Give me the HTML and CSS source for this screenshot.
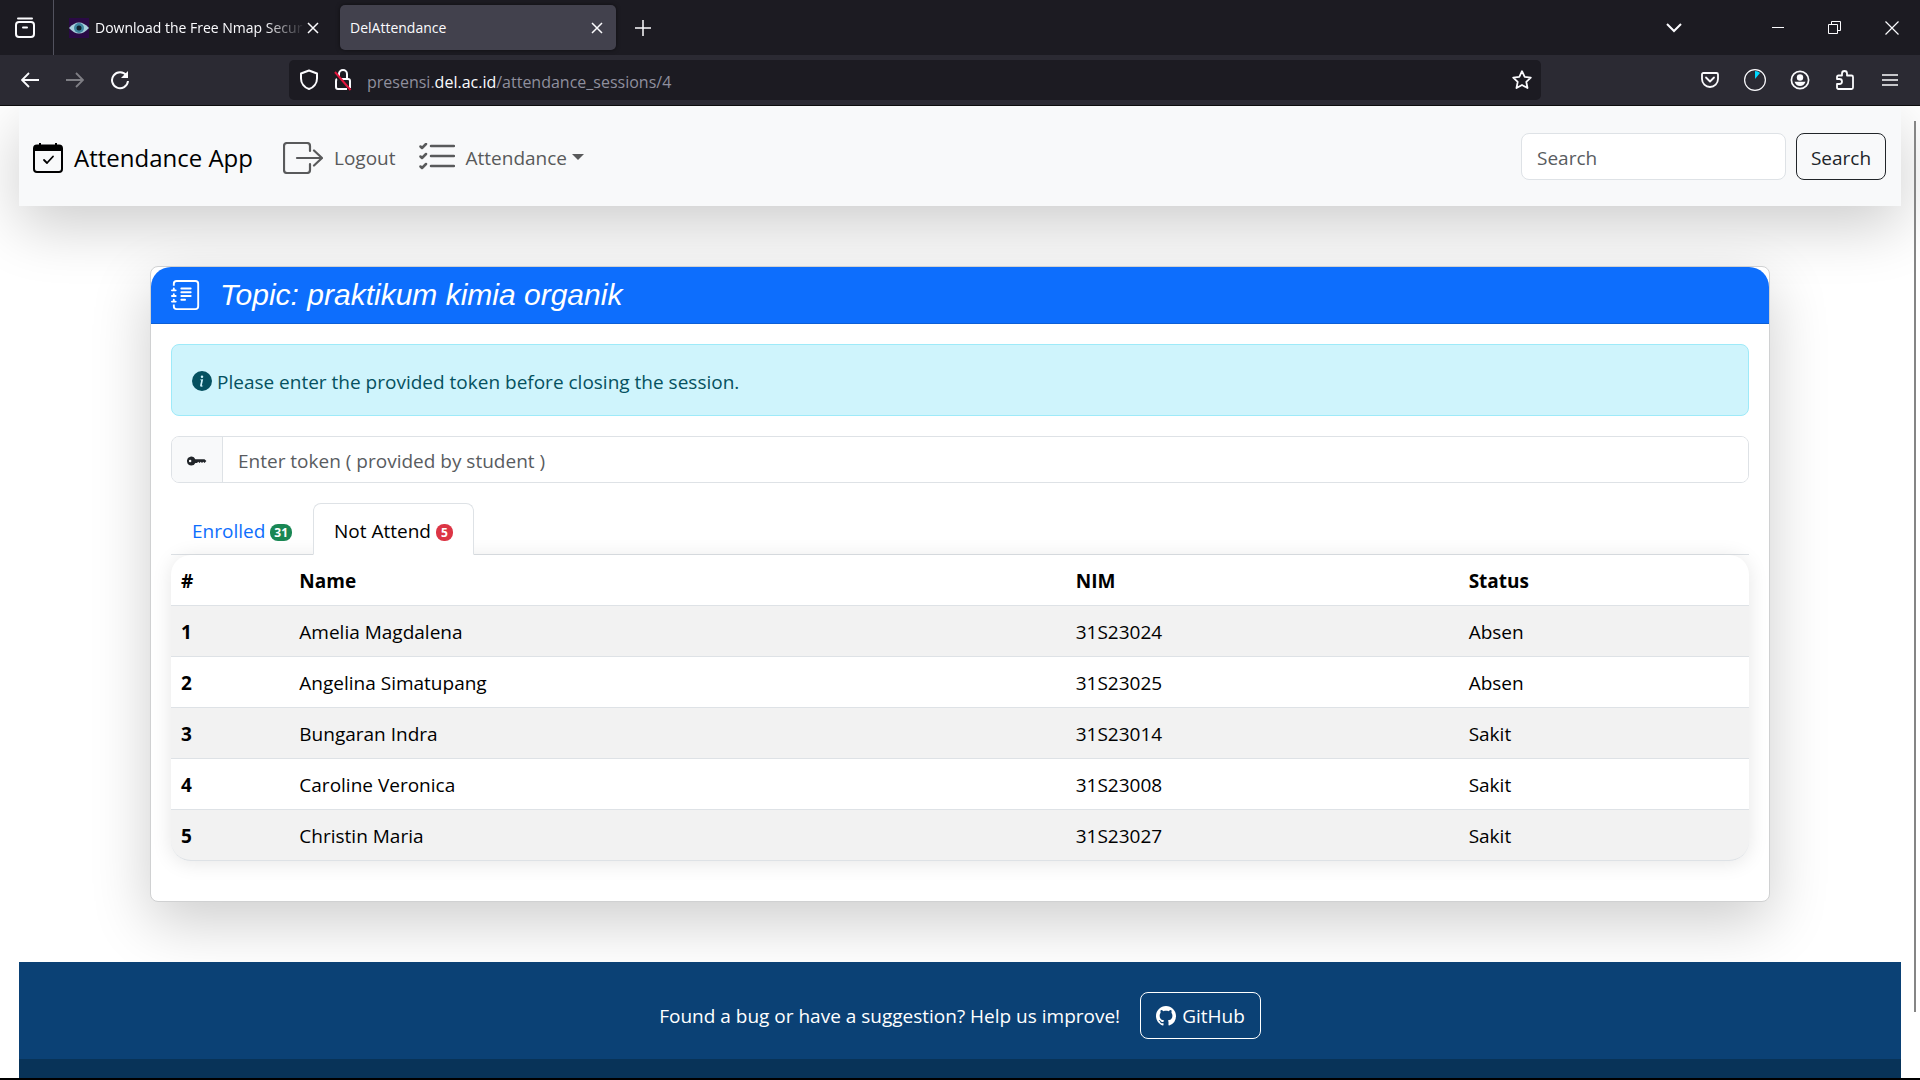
FILE: index.html
```html
<!DOCTYPE html>
<html lang="en">
<head>
<meta charset="utf-8">
<title>DelAttendance</title>
<link rel="stylesheet" href="styles.css">
</head>
<body>
<div class="browser">
  <div class="tabbar">
    <button class="chrome-btn recent" aria-label="Recent tabs">
      <svg width="22" height="22" viewBox="0 0 22 22" fill="none" stroke="currentColor" stroke-width="2"><path d="M4 1.500h14" stroke-linecap="round"/><rect x="2" y="5" width="18" height="15" rx="3"/><path d="M9 10.500h4" stroke-linecap="round"/></svg>
    </button>
    <div class="tab tab-idle">
      <svg class="favicon" width="20" height="20" viewBox="0 0 20 20"><rect width="20" height="20" fill="#2a0a45"/><path d="M0 10Q10-1 20 10Q10 21 0 10z" fill="#a9cfdc"/><circle cx="10" cy="10" r="5" fill="#3f86a0"/><circle cx="10" cy="10" r="2.500" fill="#10222e"/></svg>
      <span class="tab-title faded">Download the Free Nmap Secur</span>
      <button class="chrome-btn close" aria-label="Close tab"><svg width="12" height="12" viewBox="0 0 12 12" stroke="currentColor" stroke-width="1.500"><path d="M1 1l10 10M11 1L1 11"/></svg></button>
    </div>
    <div class="tab tab-active">
      <span class="tab-title">DelAttendance</span>
      <button class="chrome-btn close" aria-label="Close tab"><svg width="12" height="12" viewBox="0 0 12 12" stroke="currentColor" stroke-width="1.500"><path d="M1 1l10 10M11 1L1 11"/></svg></button>
    </div>
    <button class="chrome-btn new-tab" aria-label="New tab"><svg width="16" height="16" viewBox="0 0 16 16" stroke="currentColor" stroke-width="1.500"><path d="M8 0v16M0 8h16"/></svg></button>
    <div class="window-controls">
      <button class="chrome-btn all-tabs" aria-label="List all tabs"><svg width="16" height="10" viewBox="0 0 16 10" fill="none" stroke="currentColor" stroke-width="2"><path d="M1 1l7 7 7-7"/></svg></button>
      <button class="chrome-btn control" aria-label="Minimize"><svg width="12" height="12" viewBox="0 0 12 12" fill="currentColor"><path d="M0 5h12v1H0z"/></svg></button>
      <button class="chrome-btn control" aria-label="Restore"><svg width="13" height="13" viewBox="0 0 13 13" fill="none" stroke="currentColor"><path d="M.5 3.500h9v9h-9zM3.500 3.500v-3h9v9h-3"/></svg></button>
      <button class="chrome-btn control" aria-label="Close window"><svg width="14" height="14" viewBox="0 0 14 14" stroke="currentColor" stroke-width="1.200"><path d="M.5.5l13 13M13.500.5l-13 13"/></svg></button>
    </div>
  </div>
  <div class="toolbar">
    <div class="nav-buttons">
      <button class="chrome-btn" aria-label="Back"><svg width="18" height="16" viewBox="0 0 18 16" fill="none" stroke="currentColor" stroke-width="1.800"><path d="M18 8H1M8 1L1 8l7 7"/></svg></button>
      <button class="chrome-btn dim" aria-label="Forward"><svg width="18" height="16" viewBox="0 0 18 16" fill="none" stroke="currentColor" stroke-width="1.800"><path d="M0 8h17M10 1l7 7-7 7"/></svg></button>
      <button class="chrome-btn" aria-label="Reload"><svg width="20" height="20" viewBox="0 0 20 20" fill="none" stroke="currentColor" stroke-width="2"><path d="M16.500 5.500A8 8 0 1 0 18 11"/><path d="M18 1v7h-7z" fill="currentColor" stroke="none"/></svg></button>
    </div>
    <div class="urlbar">
      <svg width="20" height="22" viewBox="0 0 20 22" fill="none" stroke="currentColor" stroke-width="2"><path d="M10 1.500l8 3v5c0 5-3.500 9-8 10.500C5.500 18.500 2 14.500 2 9.500v-5z" stroke-linejoin="round"/></svg>
      <svg width="18" height="22" viewBox="0 0 18 22" fill="none" stroke="currentColor" stroke-width="2"><path d="M5 7V5a4 4 0 0 1 8 0v5"/><path d="M7 10h7q2 0 2 2v7M13 20H4q-2 0-2-2v-6q0-1.500 1-2"/><path d="M1 3l15.500 18" stroke="#e2143c"/></svg>
      <a class="url" href="#">presensi.<b>del.ac.id</b>/attendance_sessions/4</a>
      <svg width="20" height="20" viewBox="0 0 20 20" fill="none" stroke="currentColor" stroke-width="1.800" stroke-linejoin="round"><path d="M10 1.200l2.700 5.600 6.100.8-4.500 4.200 1.200 6.200-5.500-3-5.500 3 1.200-6.200L1.200 7.600l6.100-.8z"/></svg>
    </div>
    <div class="actions">
      <button class="chrome-btn" aria-label="Save to Pocket"><svg width="18" height="16" viewBox="0 0 18 16" fill="none" stroke="currentColor" stroke-width="1.800" stroke-linejoin="round"><path d="M2.500 1h13Q17 1 17 2.500V7A8 8 0 0 1 1 7V2.500Q1 1 2.500 1z"/><path d="M5 5.500l4 4 4-4" stroke-linecap="round"/></svg></button>
      <button class="chrome-btn" aria-label="Extension"><svg width="22" height="22" viewBox="0 0 22 22"><circle cx="11" cy="11" r="10.400" fill="none" stroke="currentColor" stroke-width="1.200"/><path d="M11 10V2q3 0 5 2z" fill="#00d8ff"/></svg></button>
      <button class="chrome-btn" aria-label="Account"><svg width="20" height="20" viewBox="0 0 20 20"><circle cx="10" cy="10" r="8.600" fill="none" stroke="currentColor" stroke-width="1.700"/><circle cx="10" cy="7.500" r="3.200" fill="currentColor"/><path d="M4.500 11.800h11Q14 16 10 16t-5.500-4.200z" fill="currentColor"/></svg></button>
      <button class="chrome-btn" aria-label="Extensions"><svg width="20" height="20" viewBox="0 0 20 20" fill="none" stroke="currentColor" stroke-width="1.800" stroke-linejoin="round"><path d="M2 9V7q0-1.500 1.500-1.500H7V3.500a2.500 2.500 0 0 1 5 0v2h4.500Q18 5.500 18 7v10.500q0 1.500-1.500 1.500h-13Q2 19 2 17.500V14h2.500a2.500 2.500 0 0 0 0-5z"/></svg></button>
      <button class="chrome-btn" aria-label="Menu"><svg width="16" height="14" viewBox="0 0 16 14" stroke="currentColor" stroke-width="1.500"><path d="M0 2h16M0 7h16M0 12h16"/></svg></button>
    </div>
  </div>
</div>

<div class="viewport">
  <div class="scroll-thumb"></div>
  <nav class="navbar">
    <a class="brand" href="#">
      <svg width="30" height="30" viewBox="0 0 30 30"><rect x="1" y="2.500" width="28" height="26.500" rx="3" fill="none" stroke="currentColor" stroke-width="2"/><path d="M1 8V5q0-3 3-3h2V0h2v2h14V0h2v2h2q3 0 3 3v3z" fill="currentColor"/><path d="M11 17l3 3 6-6.500" fill="none" stroke="currentColor" stroke-width="1.800" stroke-linecap="round" stroke-linejoin="round"/></svg>
      Attendance App
    </a>
    <a class="nav-link" href="#">
      <svg width="40" height="32" viewBox="0 0 40 32" fill="none" stroke="currentColor" stroke-width="2.200" stroke-linecap="round" stroke-linejoin="round"><path d="M27 9V4q0-3-3-3H4Q1 1 1 4v24q0 3 3 3h20q3 0 3-3v-6"/><path d="M14 16h25M31 8.500l8 7.500-8 7.500"/></svg>
      Logout
    </a>
    <button class="nav-link dropdown" type="button">
      <svg width="36" height="30" viewBox="0 0 36 30" fill="none" stroke="currentColor" stroke-width="2.500" stroke-linecap="round" stroke-linejoin="round"><path d="M12 3h23M12 13h23M12 23h23"/><path d="M1.500 3.500l1.500 1.500 4-4M1.500 13.500l1.500 1.500 4-4M1.500 23.500l1.500 1.500 4-4"/></svg>
      <span>Attendance<i class="caret"></i></span>
    </button>
    <form class="search">
      <input class="field" type="search" placeholder="Search" aria-label="Search">
      <button class="btn-dark" type="button">Search</button>
    </form>
  </nav>

  <main class="card">
    <header class="card-header">
      <svg width="30" height="30" viewBox="0 0 16 16" fill="currentColor"><path d="M5 10.500a.5.5 0 0 1 .5-.5h2a.5.5 0 0 1 0 1h-2a.5.5 0 0 1-.5-.5m0-2a.5.5 0 0 1 .5-.5h5a.5.5 0 0 1 0 1h-5a.5.5 0 0 1-.5-.5m0-2a.5.5 0 0 1 .5-.5h5a.5.5 0 0 1 0 1h-5a.5.5 0 0 1-.5-.5m0-2a.5.5 0 0 1 .5-.5h5a.5.5 0 0 1 0 1h-5a.5.5 0 0 1-.5-.5"/><path d="M3 0h10a2 2 0 0 1 2 2v12a2 2 0 0 1-2 2H3a2 2 0 0 1-2-2v-1h1v1a1 1 0 0 0 1 1h10a1 1 0 0 0 1-1V2a1 1 0 0 0-1-1H3a1 1 0 0 0-1 1v1H1V2a2 2 0 0 1 2-2"/><path d="M1 5v-.5a.5.5 0 0 1 1 0V5h.5a.5.5 0 0 1 0 1h-2a.5.5 0 0 1 0-1zm0 3v-.5a.5.5 0 0 1 1 0V8h.5a.5.5 0 0 1 0 1h-2a.5.5 0 0 1 0-1zm0 3v-.5a.5.5 0 0 1 1 0v.5h.5a.5.5 0 0 1 0 1h-2a.5.5 0 0 1 0-1z"/></svg>
      <h1 class="topic">Topic: praktikum kimia organik</h1>
    </header>
    <div class="card-body">
      <div class="alert" role="alert">
        <svg width="20" height="20" viewBox="0 0 16 16" fill="currentColor"><path d="M8 16A8 8 0 1 0 8 0a8 8 0 0 0 0 16m.93-9.412-1 4.705c-.07.34.029.533.304.533.194 0 .487-.07.686-.246l-.088.416c-.287.346-.92.598-1.465.598-.703 0-1.002-.422-.808-1.319l.738-3.468c.064-.293.006-.399-.287-.47l-.451-.081.082-.381 2.290-.287zM8 5.500a1 1 0 1 1 0-2 1 1 0 0 1 0 2"/></svg>
        <span class="alert-text">Please enter the provided token before closing the session.</span>
      </div>
      <div class="input-group">
        <label class="addon" for="token" aria-label="Token"><svg width="20" height="20" viewBox="0 0 16 16" fill="currentColor"><path d="M3.500 11.500a3.500 3.500 0 1 1 3.163-5H14L15.500 8 14 9.500l-1-1-1 1-1-1-1 1-1-1-1 1H6.663a3.500 3.500 0 0 1-3.163 2M2.500 9a1 1 0 1 0 0-2 1 1 0 0 0 0 2"/></svg></label>
        <input class="token" id="token" type="text" placeholder="Enter token ( provided by student )">
      </div>
      <div class="tabs">
        <a class="tab-link" href="#">Enrolled <span class="badge green">31</span></a>
        <a class="tab-link current" href="#">Not Attend <span class="badge red">5</span></a>
      </div>
      <table class="students">
        <colgroup><col class="c-num"><col class="c-name"><col class="c-nim"><col></colgroup>
        <thead><tr><th>#</th><th>Name</th><th>NIM</th><th>Status</th></tr></thead>
        <tbody>
          <tr><th>1</th><td>Amelia Magdalena</td><td>31S23024</td><td>Absen</td></tr>
          <tr><th>2</th><td>Angelina Simatupang</td><td>31S23025</td><td>Absen</td></tr>
          <tr><th>3</th><td>Bungaran Indra</td><td>31S23014</td><td>Sakit</td></tr>
          <tr><th>4</th><td>Caroline Veronica</td><td>31S23008</td><td>Sakit</td></tr>
          <tr><th>5</th><td>Christin Maria</td><td>31S23027</td><td>Sakit</td></tr>
        </tbody>
      </table>
    </div>
  </main>

  <footer class="footer">
    <div class="footer-main">
      <span>Found a bug or have a suggestion? Help us improve!</span>
      <a class="github" href="#"><svg width="20" height="20" viewBox="0 0 16 16" fill="currentColor"><path d="M8 0C3.580 0 0 3.580 0 8c0 3.540 2.290 6.530 5.470 7.590.4.070.55-.17.55-.38 0-.19-.01-.82-.01-1.490-2.010.37-2.530-.49-2.690-.94-.09-.23-.48-.94-.82-1.130-.28-.15-.68-.52-.01-.53.63-.01 1.080.58 1.230.82.72 1.210 1.870.87 2.330.66.070-.52.28-.87.51-1.070-1.780-.2-3.640-.89-3.640-3.950 0-.87.31-1.590.82-2.150-.08-.2-.36-1.020.08-2.120 0 0 .67-.21 2.200.82.64-.18 1.320-.27 2-.27s1.360.09 2 .27c1.530-1.040 2.200-.82 2.200-.82.44 1.100.16 1.920.08 2.120.51.56.82 1.270.82 2.150 0 3.070-1.870 3.750-3.650 3.950.29.25.54.73.54 1.480 0 1.070-.01 1.930-.01 2.200 0 .21.15.46.55.38A8.010 8.010 0 0 0 16 8c0-4.420-3.580-8-8-8"/></svg>GitHub</a>
    </div>
  </footer>
</div>
</body>
</html>
```
FILE: styles.css
```css
*, *::before, *::after { box-sizing: border-box; }

body {
  margin: 0;
  height: 100vh;
  display: flex;
  flex-direction: column;
  overflow: hidden;
  background: #fff;
  color: #212529;
  font: 19px/30px "Segoe UI", "Open Sans", "Noto Sans", sans-serif;
}

button, input { font: inherit; }
a { color: inherit; text-decoration: none; }
svg { display: block; flex: none; }

/* Browser frame */
.browser {
  flex: none;
  color: #fbfbfe;
  font-size: 14px;
  line-height: 20px;
  border-bottom: 1px solid #0c0c0d;
}
.chrome-btn {
  display: flex;
  align-items: center;
  justify-content: center;
  padding: 0;
  border: 0;
  background: none;
  color: inherit;
}
.tabbar {
  display: flex;
  align-items: center;
  height: 55px;
  background: #1c1b22;
}
.recent { width: 54px; height: 55px; padding-right: 4px; border-right: 1px solid #52525e; }
.tab {
  display: flex;
  align-items: center;
  width: 276px;
  height: 45px;
  padding: 0 11px 0 10px;
  border-radius: 5px;
}
.tab-idle { width: 278px; margin-right: 8px; padding-left: 15px; }
.tab-active { background: #42414d; box-shadow: 0 0 4px rgba(0, 0, 0, .5); }
.favicon { margin-right: 6px; }
.tab-title { flex: 1; overflow: hidden; white-space: nowrap; }
.faded {
  -webkit-mask-image: linear-gradient(to left, transparent, #000 40px);
  mask-image: linear-gradient(to left, transparent, #000 40px);
}
.close { width: 16px; height: 16px; }
.new-tab { width: 54px; height: 45px; }
.window-controls { display: flex; margin-left: auto; height: 55px; }
.all-tabs { width: 46px; margin-right: 52px; }
.control { width: 57px; }

.toolbar {
  display: flex;
  align-items: center;
  height: 50px;
  background: #2b2a33;
}
.nav-buttons { display: flex; gap: 25px; width: 289px; padding-left: 20px; }
.nav-buttons .chrome-btn { width: 20px; height: 20px; }
.dim { opacity: .4; }
.urlbar {
  flex: 1;
  display: flex;
  align-items: center;
  gap: 15px;
  height: 40px;
  padding: 0 9px 0 10px;
  border-radius: 5px;
  background: #1c1b22;
}
.url { flex: 1; padding-top: 3px; font-size: 16px; color: #8f8f9d; }
.url b { font-weight: 400; color: #fbfbfe; }
.actions { display: flex; gap: 23px; width: 379px; padding-right: 19px; justify-content: flex-end; }
.actions .chrome-btn { width: 22px; height: 22px; }

/* Page */
.viewport {
  position: relative;
  flex: 1;
  display: flex;
  flex-direction: column;
  overflow: hidden;
  padding: 0 19px;
  border-bottom: 2px solid #000;
}
.scroll-thumb {
  position: absolute;
  top: 15px;
  right: 4px;
  bottom: 66px;
  width: 2px;
  background: #858585;
}

.navbar {
  display: flex;
  align-items: center;
  height: 100px;
  flex: none;
  padding: 4px 15px 0 14px;
  background: #f8f9fa;
  box-shadow: 0 20px 60px rgba(0, 0, 0, .2);
}
.brand {
  display: flex;
  align-items: center;
  gap: 11px;
  margin-right: 30px;
  font-size: 24px;
  color: #000;
}
.nav-link {
  display: flex;
  align-items: center;
  gap: 11px;
  margin-right: 23px;
  padding: 0;
  border: 0;
  background: none;
  color: #595a5b;
}
.caret {
  display: inline-block;
  margin-left: 5px;
  vertical-align: 5px;
  border: 6px solid transparent;
  border-top-color: currentColor;
  border-bottom: 0;
}
.search { display: flex; gap: 10px; margin: 0 0 4px auto; }
.field {
  width: 265px;
  height: 47px;
  padding: 3px 15px 0;
  border: 1px solid #dee2e6;
  border-radius: 8px;
  background: #fff;
}
::placeholder { color: #595c5f; opacity: 1; }
.btn-dark {
  width: 90px;
  height: 47px;
  padding: 3px 0 0;
  border: 1px solid #212529;
  border-radius: 8px;
  background: none;
  color: #212529;
}

.card {
  flex: none;
  margin: 60px 131px;
  border: 1px solid #d0d1d2;
  border-radius: 8px;
  background: #fff;
  box-shadow: 0 20px 60px rgba(0, 0, 0, .2);
}
.card-header {
  display: flex;
  align-items: center;
  gap: 19px;
  height: 57px;
  padding: 0 20px;
  border-bottom: 1px solid #0c5fd6;
  border-radius: 20px 20px 0 0;
  background: #0d6efd;
  color: #fff;
}
.topic {
  margin: 0;
  font: italic 30px/36px "Liberation Sans", Arial, sans-serif;
}
.card-body { padding: 20px 20px 40px; }
.alert {
  display: flex;
  align-items: center;
  gap: 5px;
  height: 72px;
  padding: 2px 20px 0;
  border: 1px solid #9eeaf9;
  border-radius: 8px;
  background: #cff4fc;
  color: #055160;
}
.alert-text { padding-top: 1px; }
.input-group {
  display: flex;
  height: 47px;
  margin: 20px 0;
  border: 1px solid #dee2e6;
  border-radius: 8px;
  overflow: hidden;
}
.addon {
  display: flex;
  align-items: center;
  padding: 2px 15px 0;
  border-right: 1px solid #dee2e6;
  background: #f8f9fa;
}
.token { flex: 1; padding: 2px 15px 0; border: 0; background: #fff; }

.tabs { display: flex; border-bottom: 1px solid #dee2e6; }
.tab-link {
  display: flex;
  align-items: center;
  gap: 5px;
  height: 52px;
  margin-bottom: -1px;
  padding: 4px 20px 0;
  border: 1px solid transparent;
  border-radius: 8px 8px 0 0;
  color: #0d6efd;
}
.current {
  position: relative;
  z-index: 1;
  border-color: #dee2e6 #dee2e6 #fff;
  background: #fff;
  color: #000;
}
.badge {
  margin-top: 2px;
  padding: 0 5px;
  border-radius: 8px;
  color: #fff;
  font-size: 12px;
  font-weight: 700;
  line-height: 17px;
}
.green { padding: 0 4px; background: #198754; }
.red { background: #dc3545; }

.students {
  width: 100%;
  table-layout: fixed;
  border-spacing: 0;
  border-radius: 20px;
  box-shadow: 0 2px 20px rgba(0, 0, 0, .1);
  color: #000;
}
.c-num { width: 7.5%; }
.c-name { width: 49.2%; }
.c-nim { width: 24.9%; }
.students th, .students td {
  height: 51px;
  padding: 2px 10px 0;
  border-bottom: 1px solid #dee2e6;
  text-align: left;
}
.students tbody tr:nth-child(odd) > * { background: #f2f2f2; }
.students tbody tr:last-child > :first-child { border-bottom-left-radius: 20px; }
.students tbody tr:last-child > :last-child { border-bottom-right-radius: 20px; }

.footer { flex: 1; position: relative; background: #083358; color: #fff; }
.footer-main {
  display: flex;
  align-items: center;
  justify-content: center;
  gap: 20px;
  height: 97px;
  padding-top: 10px;
  background: #0b4175;
}
.github {
  display: flex;
  align-items: center;
  gap: 6px;
  height: 47px;
  padding: 0 15px;
  border: 1px solid #fff;
  border-radius: 8px;
}
```
